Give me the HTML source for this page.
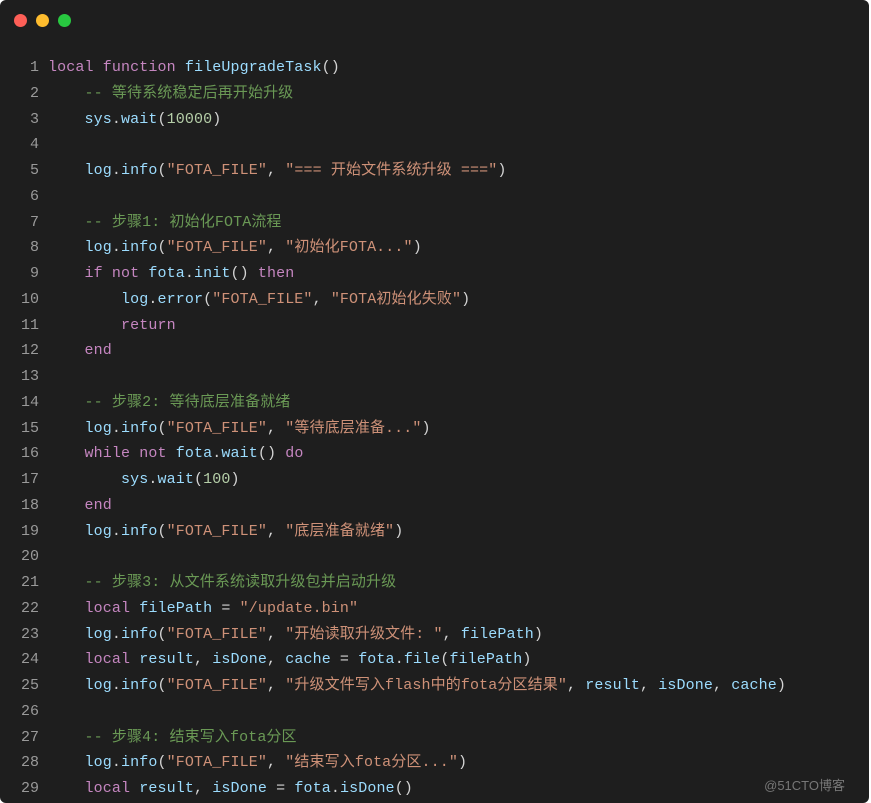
<!DOCTYPE html>
<html><head><meta charset="utf-8"><style>
html,body{margin:0;padding:0;background:#fff;}
.win{position:absolute;left:0;top:0;width:869px;height:803px;background:#1e1e1e;border-radius:6px;overflow:hidden;}
.dot{position:absolute;top:14px;width:13px;height:13px;border-radius:50%;}
.code{position:absolute;left:0;top:55px;font-family:"Liberation Mono","Noto Sans CJK SC",monospace;font-size:15px;line-height:25.75px;color:#d4d4d4;white-space:normal;letter-spacing:0.12px;}
.l{display:block;height:25.75px;white-space:pre;}
.n{display:inline-block;width:39px;text-align:right;color:#9a9a9a;margin-right:9px;letter-spacing:0;}
.k{color:#c586c0}.f{color:#9cdcfe}.c{color:#6a9955}.s{color:#ce9178}.d{color:#b5cea8}
.wm{position:absolute;right:24px;top:775px;font-family:"Liberation Sans","Noto Sans CJK SC",sans-serif;font-size:13px;color:#777;}
</style></head><body><div class="win">
<div class="dot" style="left:14px;background:#fe5f57"></div>
<div class="dot" style="left:36px;background:#febc2e"></div>
<div class="dot" style="left:58px;background:#28c840"></div>
<div class="code">
<span class="l"><span class="n">1</span><span class="k">local</span> <span class="k">function</span> <span class="f">fileUpgradeTask</span>()</span>
<span class="l"><span class="n">2</span>    <span class="c">-- 等待系统稳定后再开始升级</span></span>
<span class="l"><span class="n">3</span>    <span class="f">sys</span>.<span class="f">wait</span>(<span class="d">10000</span>)</span>
<span class="l"><span class="n">4</span></span>
<span class="l"><span class="n">5</span>    <span class="f">log</span>.<span class="f">info</span>(<span class="s">"FOTA_FILE"</span>, <span class="s">"=== 开始文件系统升级 ==="</span>)</span>
<span class="l"><span class="n">6</span></span>
<span class="l"><span class="n">7</span>    <span class="c">-- 步骤1: 初始化FOTA流程</span></span>
<span class="l"><span class="n">8</span>    <span class="f">log</span>.<span class="f">info</span>(<span class="s">"FOTA_FILE"</span>, <span class="s">"初始化FOTA..."</span>)</span>
<span class="l"><span class="n">9</span>    <span class="k">if</span> <span class="k">not</span> <span class="f">fota</span>.<span class="f">init</span>() <span class="k">then</span></span>
<span class="l"><span class="n">10</span>        <span class="f">log</span>.<span class="f">error</span>(<span class="s">"FOTA_FILE"</span>, <span class="s">"FOTA初始化失败"</span>)</span>
<span class="l"><span class="n">11</span>        <span class="k">return</span></span>
<span class="l"><span class="n">12</span>    <span class="k">end</span></span>
<span class="l"><span class="n">13</span></span>
<span class="l"><span class="n">14</span>    <span class="c">-- 步骤2: 等待底层准备就绪</span></span>
<span class="l"><span class="n">15</span>    <span class="f">log</span>.<span class="f">info</span>(<span class="s">"FOTA_FILE"</span>, <span class="s">"等待底层准备..."</span>)</span>
<span class="l"><span class="n">16</span>    <span class="k">while</span> <span class="k">not</span> <span class="f">fota</span>.<span class="f">wait</span>() <span class="k">do</span></span>
<span class="l"><span class="n">17</span>        <span class="f">sys</span>.<span class="f">wait</span>(<span class="d">100</span>)</span>
<span class="l"><span class="n">18</span>    <span class="k">end</span></span>
<span class="l"><span class="n">19</span>    <span class="f">log</span>.<span class="f">info</span>(<span class="s">"FOTA_FILE"</span>, <span class="s">"底层准备就绪"</span>)</span>
<span class="l"><span class="n">20</span></span>
<span class="l"><span class="n">21</span>    <span class="c">-- 步骤3: 从文件系统读取升级包并启动升级</span></span>
<span class="l"><span class="n">22</span>    <span class="k">local</span> <span class="f">filePath</span> = <span class="s">"/update.bin"</span></span>
<span class="l"><span class="n">23</span>    <span class="f">log</span>.<span class="f">info</span>(<span class="s">"FOTA_FILE"</span>, <span class="s">"开始读取升级文件: "</span>, <span class="f">filePath</span>)</span>
<span class="l"><span class="n">24</span>    <span class="k">local</span> <span class="f">result</span>, <span class="f">isDone</span>, <span class="f">cache</span> = <span class="f">fota</span>.<span class="f">file</span>(<span class="f">filePath</span>)</span>
<span class="l"><span class="n">25</span>    <span class="f">log</span>.<span class="f">info</span>(<span class="s">"FOTA_FILE"</span>, <span class="s">"升级文件写入flash中的fota分区结果"</span>, <span class="f">result</span>, <span class="f">isDone</span>, <span class="f">cache</span>)</span>
<span class="l"><span class="n">26</span></span>
<span class="l"><span class="n">27</span>    <span class="c">-- 步骤4: 结束写入fota分区</span></span>
<span class="l"><span class="n">28</span>    <span class="f">log</span>.<span class="f">info</span>(<span class="s">"FOTA_FILE"</span>, <span class="s">"结束写入fota分区..."</span>)</span>
<span class="l"><span class="n">29</span>    <span class="k">local</span> <span class="f">result</span>, <span class="f">isDone</span> = <span class="f">fota</span>.<span class="f">isDone</span>()</span>
</div>
<div class="wm">@51CTO博客</div>
</div></body></html>
